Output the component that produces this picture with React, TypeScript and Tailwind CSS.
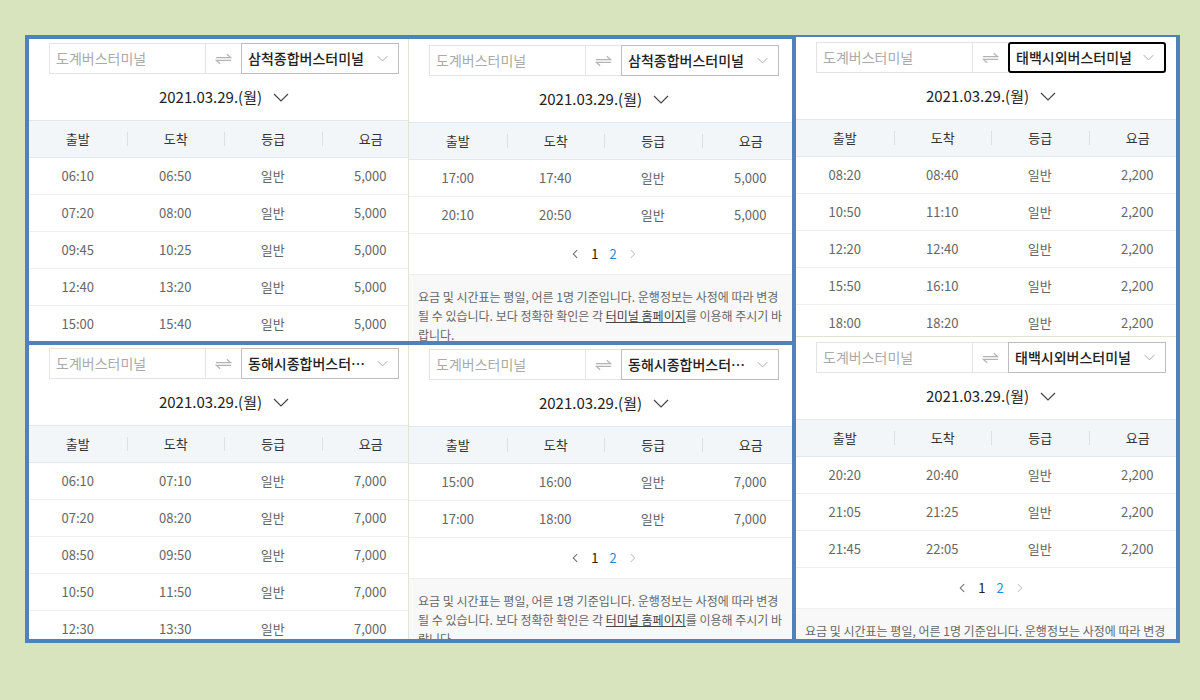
type Row = [string, string, string, string]

const font = { fontFamily: '"Noto Sans CJK KR", "Noto Sans", sans-serif' }

function Chevron({ className }: { className: string }) {
  return (
    <svg viewBox="0 0 16 9" className={className} fill="none" stroke="currentColor" strokeWidth="1.2">
      <path d="M1 1l7 7 7-7" />
    </svg>
  )
}

function PageArrow({ left, className }: { left?: boolean; className: string }) {
  return (
    <svg viewBox="0 0 7 11" className={className} fill="none" stroke="currentColor" strokeWidth="1.2">
      <path d={left ? 'M6 1L1.5 5.5 6 10' : 'M1 1l4.5 4.5L1 10'} />
    </svg>
  )
}

function SwapIcon() {
  return (
    <svg viewBox="0 0 18 12" className="w-[17px] h-[12px] text-[#b3b3b3]" fill="none" stroke="currentColor" strokeWidth="1.3">
      <path d="M1 4.5h15.5L12.5 1" />
      <path d="M17 7.5H1.5L5.5 11" />
    </svg>
  )
}

function Panel({ to, rows, focused, paging, notice, pt }: { to: string; rows: Row[]; focused?: boolean; paging?: boolean; notice?: boolean; pt: string }) {
  return (
    <div className={`w-[390px] shrink-0 bg-white ${pt}`}>
      <div className="flex h-[31px] ml-[20px] w-[350px]">
        <div className="w-[157px] border border-[#e4e4e4] flex items-center pl-[6px] text-[14px] text-[#aaa]">도계버스터미널</div>
        <div className="w-[35px] border-y border-[#e4e4e4] flex items-center justify-center"><SwapIcon /></div>
        <div className={`w-[158px] flex items-center pl-[6px] pr-[10px] gap-2 ${focused ? 'border-2 border-black rounded-[3px] pl-[5px]' : 'border border-[#bdbdbd]'}`}>
          <span className="flex-1 truncate text-[14px] font-medium text-[#222]">{to}</span>
          <Chevron className="w-[11px] h-[7px] text-[#999] shrink-0" />
        </div>
      </div>
      <div className="h-[46px] flex items-center justify-center gap-[11px]">
        <span className="text-[15px] text-[#222]">2021.03.29.(월)</span>
        <Chevron className="w-[16px] h-[9px] text-[#444]" />
      </div>
      <div className="h-[38px] flex items-center bg-[#f3f6f9] border-y border-[#e2e7ec] text-[13px] text-[#333]">
        {['출발', '도착', '등급', '요금'].map((h, i) => (
          <div key={h} className="flex-1 flex items-center">
            {i > 0 && <span className="w-px h-[14px] bg-[#dcdfe3]" />}
            <span className="flex-1 text-center">{h}</span>
          </div>
        ))}
      </div>
      {rows.map((r, i) => (
        <div key={i} className="h-[37px] flex items-center border-b border-[#eeeeee] text-[13px] text-[#666]">
          {r.map((c, j) => <div key={j} className="flex-1 text-center">{c}</div>)}
        </div>
      ))}
      {paging && (
        <div className="h-[41px] flex items-center justify-center gap-[11px] border-b border-[#eeeeee] text-[13px]">
          <PageArrow left className="w-[6px] h-[10px] text-[#666] mr-[2px]" />
          <span className="text-[#222]">1</span>
          <span className="text-[#1e88e5]">2</span>
          <PageArrow className="w-[6px] h-[10px] text-[#c8c8c8] ml-[2px]" />
        </div>
      )}
      {notice && (
        <div className="bg-[#f8f8f8] px-[9px] pt-[12px] pb-4 text-[12px] leading-[19px] text-[#666] whitespace-nowrap">
          <div>요금 및 시간표는 평일, 어른 1명 기준입니다. 운행정보는 사정에 따라 변경</div>
          <div>될 수 있습니다. 보다 정확한 확인은 각 <span className="underline text-[#444]">터미널 홈페이지</span>를 이용해 주시기 바</div>
          <div>랍니다.</div>
        </div>
      )}
    </div>
  )
}

const fare = (list: [string, string][], f: string): Row[] => list.map(([a, b]) => [a, b, '일반', f])

export default function App() {
  return (
    <div className="w-[1200px] h-[700px] bg-[#d7e4bd] pt-[35px] pl-[25px] flex overflow-hidden" style={font}>
      <div className="w-[771px] h-[608px] border-4 border-[#4f81bd] flex flex-col bg-[#4f81bd]">
        <div className="h-[302px] flex overflow-hidden">
          <div className="w-[380px] overflow-hidden border-r border-[#dfe7cf]">
            <Panel pt="pt-[4px]" to="삼척종합버스터미널" rows={fare([['06:10', '06:50'], ['07:20', '08:00'], ['09:45', '10:25'], ['12:40', '13:20'], ['15:00', '15:40']], '5,000')} />
          </div>
          <div className="w-[383px] overflow-hidden">
            <Panel pt="pt-[6px]" to="삼척종합버스터미널" paging notice rows={fare([['17:00', '17:40'], ['20:10', '20:50']], '5,000')} />
          </div>
        </div>
        <div className="h-[4px] shrink-0" />
        <div className="h-[294px] flex overflow-hidden">
          <div className="w-[380px] overflow-hidden border-r border-[#dfe7cf]">
            <Panel pt="pt-[3px]" to="동해시종합버스터미널" rows={fare([['06:10', '07:10'], ['07:20', '08:20'], ['08:50', '09:50'], ['10:50', '11:50'], ['12:30', '13:30']], '7,000')} />
          </div>
          <div className="w-[383px] overflow-hidden">
            <Panel pt="pt-[4px]" to="동해시종합버스터미널" paging notice rows={fare([['15:00', '16:00'], ['17:00', '18:00']], '7,000')} />
          </div>
        </div>
      </div>
      <div className="w-[384px] h-[608px] border-4 border-l-0 border-t-2 border-[#4f81bd] flex flex-col bg-white">
        <div className="h-[300px] overflow-hidden border-b border-[#dde5cc]">
          <Panel pt="pt-[5px]" focused to="태백시외버스터미널" rows={fare([['08:20', '08:40'], ['10:50', '11:10'], ['12:20', '12:40'], ['15:50', '16:10'], ['18:00', '18:20']], '2,200')} />
        </div>
        <div className="flex-1 overflow-hidden">
          <Panel pt="pt-[5px]" to="태백시외버스터미널" paging notice rows={fare([['20:20', '20:40'], ['21:05', '21:25'], ['21:45', '22:05']], '2,200')} />
        </div>
      </div>
    </div>
  )
}
